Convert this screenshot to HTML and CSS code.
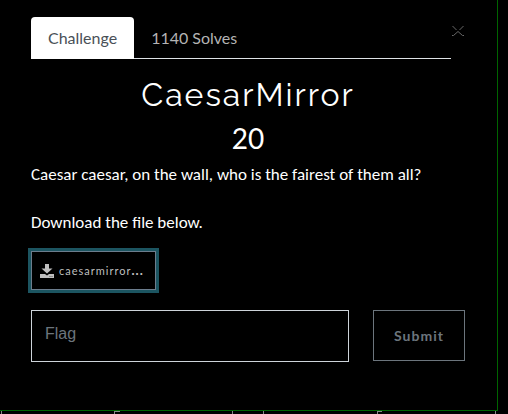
FILE: index.html
```html
<!DOCTYPE html>
<html lang="en">
<head>
<meta charset="utf-8">
<meta name="viewport" content="width=device-width, initial-scale=1">
<title>CaesarMirror</title>
<link rel="stylesheet" href="styles.css">
</head>
<body>
<main class="modal">
  <header class="modal-head">
    <nav class="tabs">
      <a class="tab tab-active" href="#challenge">Challenge</a>
      <a class="tab" href="#solves">1140 Solves</a>
    </nav>
    <button class="close" type="button" aria-label="Close">
      <svg width="14" height="12" viewBox="0 0 14 12" fill="none" stroke="currentColor"><path d="M1.500 1 L5.500 5 M12.500 1 L8.500 5 M1 10.500 H2.500 L7 6.500 L11.500 10.500 H13"/></svg>
    </button>
  </header>
  <h1 class="title">CaesarMirror</h1>
  <p class="points">20</p>
  <div class="description">
    <p>Caesar caesar, on the wall, who is the fairest of them all?</p>
    <p>Download the file below.</p>
  </div>
  <a class="download" href="#file">
    <svg width="14" height="14" viewBox="0 0 14 14" fill="currentColor"><path d="M5 0h4v4.500h3.500L7 9.500 1.500 4.500H5z"/><path d="M0 10h5l2 1.500L9 10h5v4H0z"/><path d="M9.500 12.500h1M11.500 12.500h1" stroke="#555"/></svg>
    <span>caesarmirror<b>...</b></span>
  </a>
  <form class="answer">
    <input class="flag" type="text" placeholder="Flag" aria-label="Flag">
    <button class="submit" type="button">Submit</button>
  </form>
</main>
<div class="board">
  <div class="card"></div>
  <div class="card"></div>
</div>
</body>
</html>
```
FILE: styles.css
```css
* {
  box-sizing: border-box;
}

body {
  margin: 0;
  background: #000;
  color: #fff;
  font: 16px/24px Lato, sans-serif;
  overflow: hidden;
}

p,
h1 {
  margin: 0;
}

.modal {
  margin-right: 10px;
  padding: 17px 32px 48px 31px;
  border: solid #006400;
  border-width: 0 1px 1px 0;
}

.modal-head {
  display: flex;
  align-items: flex-start;
}

.tabs {
  display: flex;
  flex: 1;
  border-bottom: 1px solid #dee2e6;
}

.tab {
  padding: 9px 17px 8px;
  color: #b4b4b4;
  text-decoration: none;
}

.tab-active {
  margin-bottom: -1px;
  padding-bottom: 9px;
  border-radius: 4px 4px 0 0;
  background: #fff;
  color: #495057;
}

.close {
  width: 14px;
  padding: 8px 0 0;
  border: 0;
  background: none;
  color: #686868;
}

.close svg {
  display: block;
}

.title {
  padding-top: 15px;
  font-family: Raleway, Lato, sans-serif;
  font-size: 32px;
  font-weight: 400;
  line-height: 42px;
  letter-spacing: 2px;
  text-align: center;
}

.points {
  padding-top: 5px;
  margin-bottom: 8px;
  font-size: 28px;
  line-height: 34px;
  text-align: center;
}

.description {
  display: grid;
  gap: 24px;
  margin-bottom: 16px;
  font-family: Carlito, Lato, sans-serif;
  font-size: 17px;
}

.download {
  display: flex;
  align-items: center;
  gap: 5px;
  width: 125px;
  height: 39px;
  padding: 0 8px;
  border: 1px solid #6c7d8d;
  box-shadow: 0 0 0 3px #1c5561;
  color: #bfbfbf;
  font-size: 11px;
  letter-spacing: 1px;
  text-decoration: none;
}

.download b {
  font-size: 13px;
  line-height: 14px;
}

.answer {
  display: grid;
  grid-template-columns: 1fr 92px;
  align-items: start;
  gap: 24px;
  margin-top: 20px;
}

.flag {
  width: 100%;
  height: 52px;
  padding: 0 13px 4px;
  border: 1px solid #ced4da;
  border-radius: 0;
  background: none;
  color: #fff;
  font: 16px/24px "Liberation Sans", sans-serif;
}

.flag::placeholder {
  color: #6c757d;
}

.submit {
  height: 51px;
  padding: 0;
  border: 1px solid #6c757d;
  background: none;
  color: #6c757d;
  font: bold 14px/20px Lato, sans-serif;
  letter-spacing: 1px;
}

.board {
  display: grid;
  grid-template-columns: 232fr 233fr;
  gap: 30px;
  margin: 0 12px 0 1px;
}

.card {
  height: 3px;
  border: solid #888;
  border-width: 0 1px;
  background:
    linear-gradient(#888, #888) 50% 0 / 5px 1px no-repeat,
    linear-gradient(#888, #888) 49% 0 / 1px 3px no-repeat;
}
```
